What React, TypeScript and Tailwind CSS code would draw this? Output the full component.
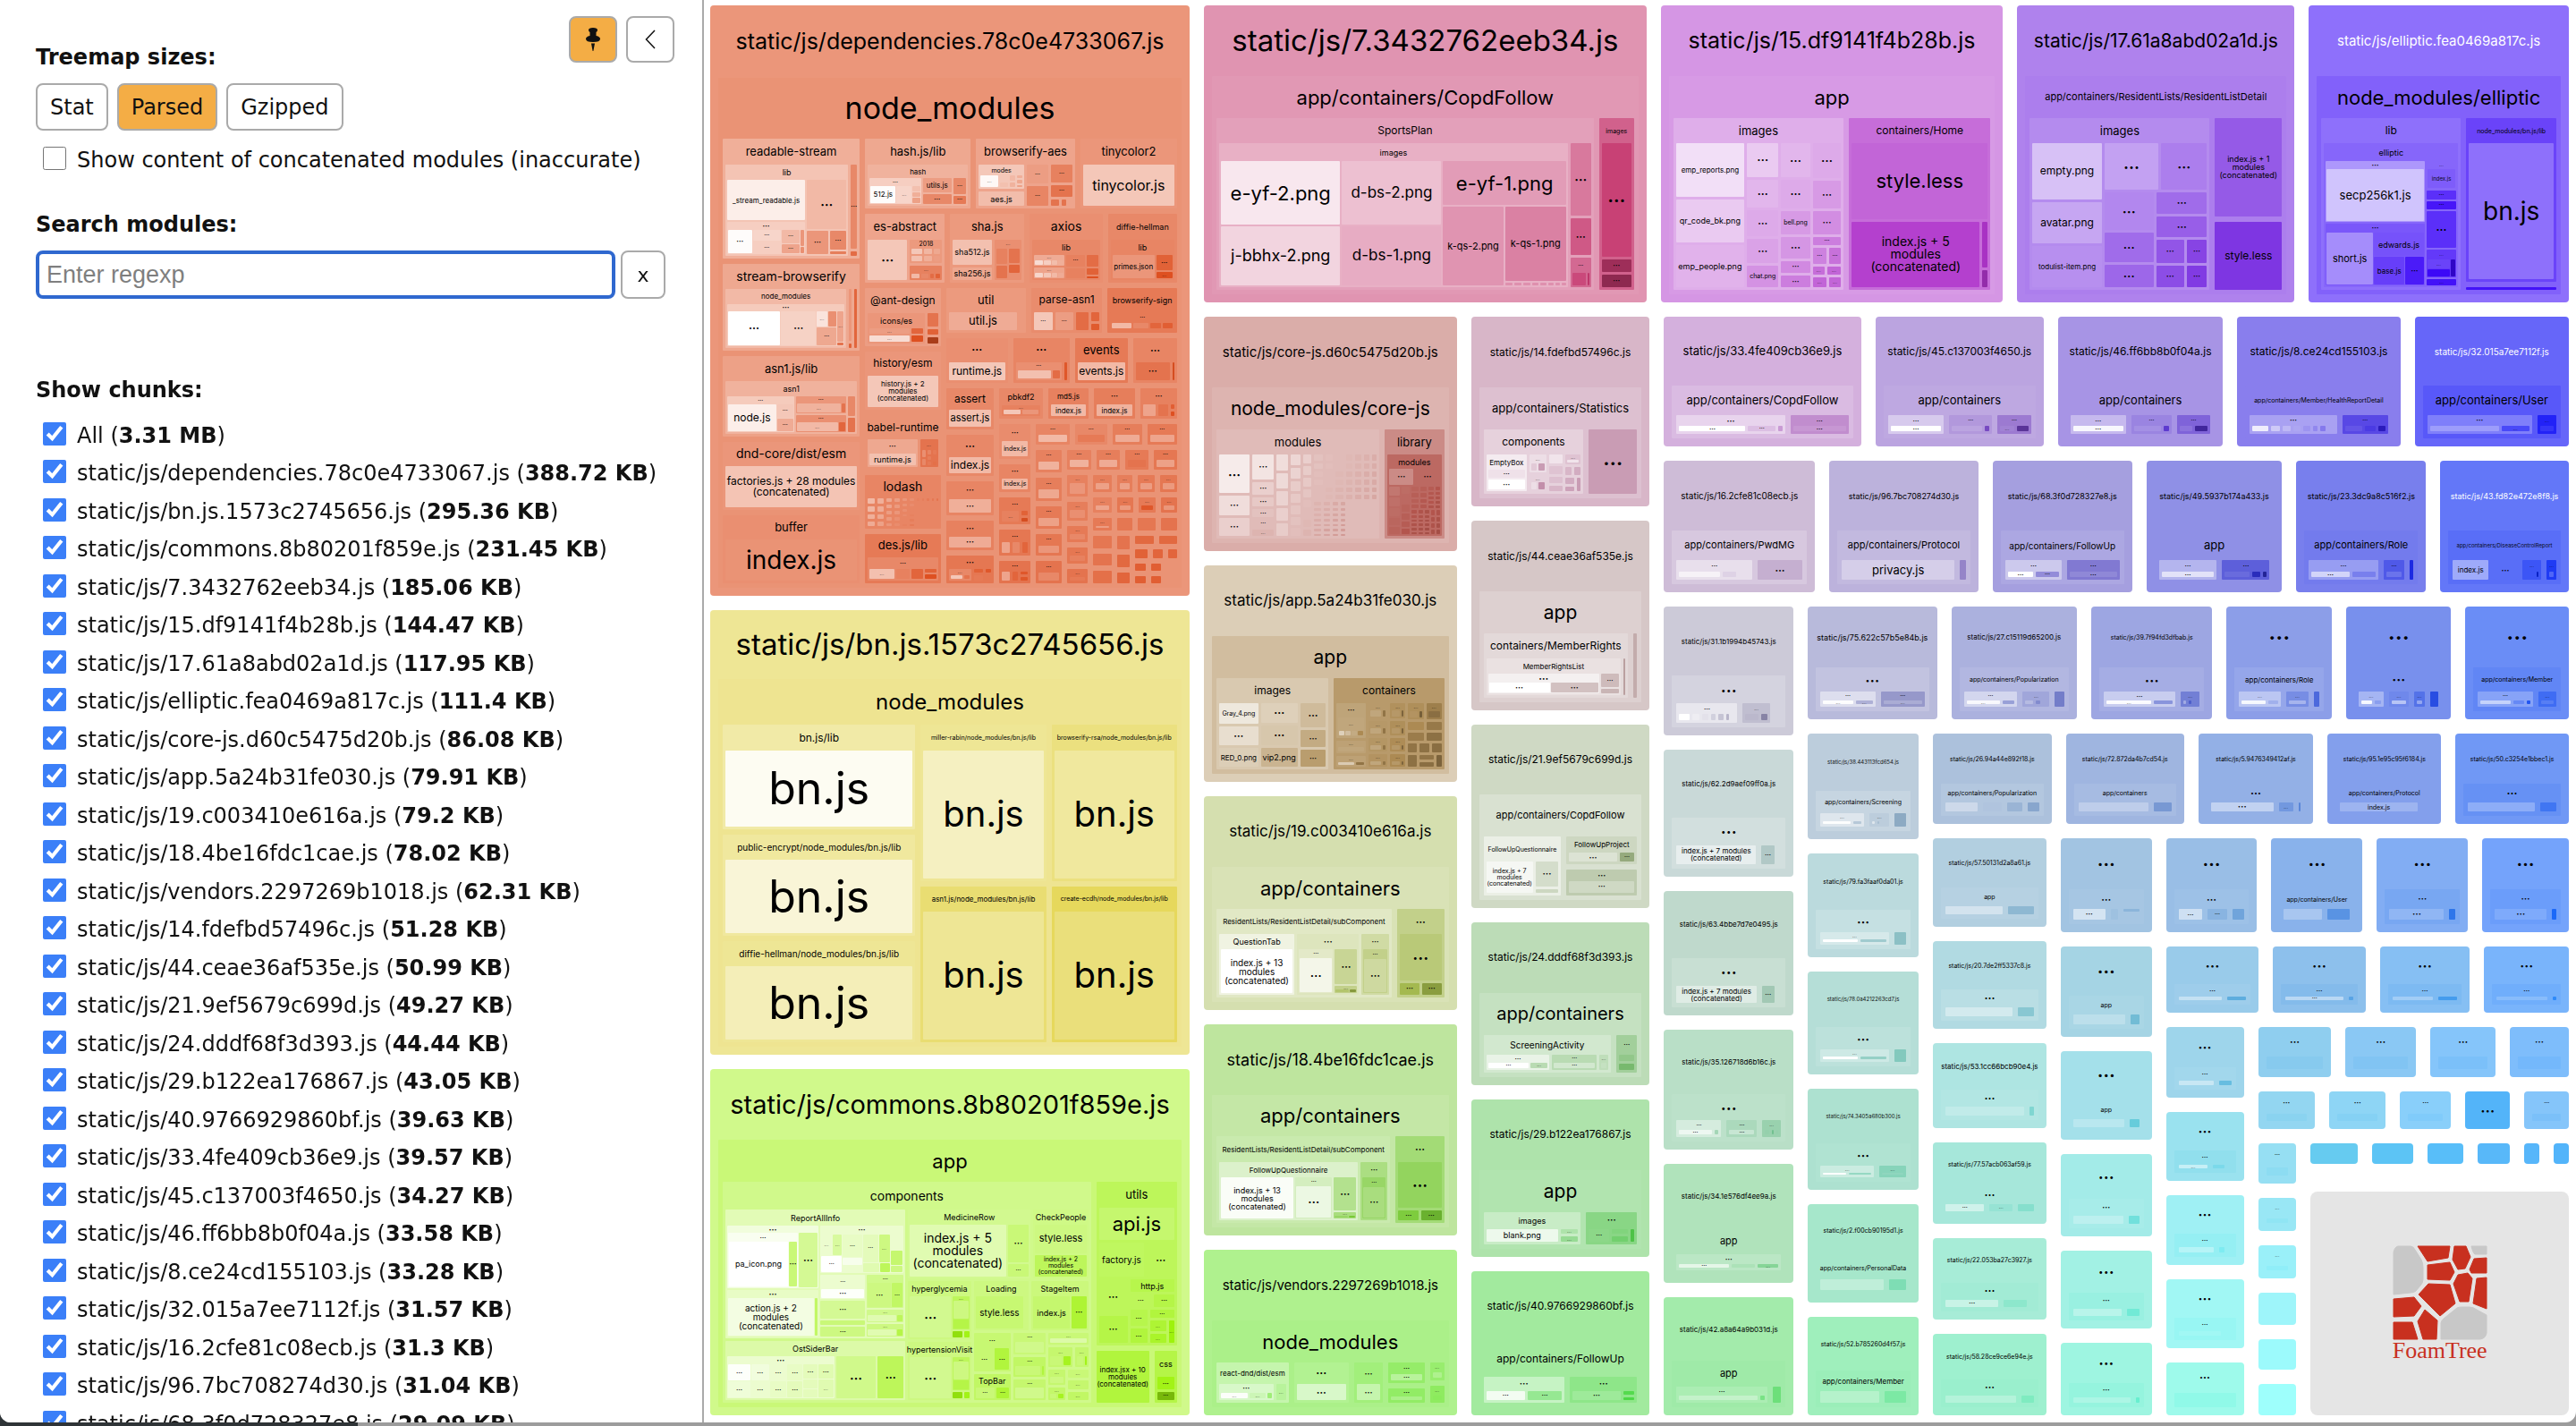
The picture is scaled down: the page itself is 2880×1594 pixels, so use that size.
import React, { useState } from 'react';

/* ---------- treemap model ---------- */

type Cell = {
  size: number;
  light?: number;
  label?: string;
  font?: number;
  head?: number;
  kids?: Cell[];
  group?: 'row' | 'col';
  hue?: number;
  sat?: number;
  logo?: boolean;
};

// Groups split their area without drawing anything themselves.
const R = (size: number, ...kids: Cell[]): Cell => ({ size, group: 'row', kids });
const C = (size: number, ...kids: Cell[]): Cell => ({ size, group: 'col', kids });
const gap = (size: number): Cell => ({ size });
// A box: weight, lightness, label, text size, height of the label band, children.
const b = (size: number, light: number, label = '', font = 8, head = 0, ...kids: Cell[]): Cell => ({
  size,
  light,
  label,
  font,
  head,
  kids,
});
// Boxes whose name does not fit show an ellipsis.
const d = (size: number, light: number, font = 8) => b(size, light, '…', font);
const m = (size: number, light: number, font: number, head: number, ...kids: Cell[]) =>
  b(size, light, '…', font, head, ...kids);
// A chunk carries the hue and the saturation for everything inside it.
const top = (
  size: number,
  [hue, sat, light]: [number, number, number],
  label: string,
  font: number,
  head: number,
  ...kids: Cell[]
): Cell => ({ size, hue, sat, light, label, font, head, kids });

// Many small modules, fading from one lightness to another.
const mesh = (size: number, counts: number[], from: number, to: number): Cell =>
  R(
    size,
    ...counts.map((n, x) =>
      C(
        counts.length * 2 - x,
        ...Array.from({ length: n }, (_, y) =>
          b(n + 3 - y / 2, Math.round(from + ((to - from) * (x + y / 2)) / (counts.length + n / 2))),
        ),
      ),
    ),
  );

/* ---------- chunks ---------- */

const tiny = (size: number, light: number) => m(size, light, 5, 9, b(1, light + 10));

const dependencies = top(
  660,
  [15, 74, 70],
  'static/js/dependencies.78c0e4733067.js',
  25,
  81,
  b(
    1, 69, 'node_modules', 34, 68,
    C(
      437,
      b(313, 77, 'readable-stream', 13, 29,
        b(392, 83, 'lib', 9, 17,
          C(250, b(106, 95, '_stream_readable.js', 8), m(84, 86, 8, 9, d(77, 99, 8), C(90, d(28, 88, 6), d(28, 86, 6)), C(60, d(32, 80, 6), d(22, 74, 6)), C(11, b(40, 70), b(16, 68)))),
          C(126, d(130, 80, 14), R(62, d(68, 70, 8), C(54, d(52, 66, 7), b(6, 63))))),
        C(20, d(226, 66, 7), b(12, 58))),
      b(228, 75, 'stream-browserify', 14, 28,
        b(385, 80, 'node_modules', 8, 17,
          m(370, 85, 8, 8, d(164, 100, 12), d(110, 87, 11), C(62, R(26, d(34, 92, 5), b(26, 68)), d(30, 75, 6)), C(20, d(60, 74, 5), b(6, 60)))),
        C(9, b(110, 70), b(10, 55)), b(8, 56)),
      b(210, 73, 'asn1.js/lib', 13, 28,
        b(412, 78, 'asn1', 9, 17,
          m(213, 85, 6, 9, b(152, 95, 'node.js', 12), C(51, d(34, 84, 6), d(34, 76, 6))),
          C(160, m(46, 70, 6, 8, d(140, 78, 5), b(10, 60)), m(44, 68, 6, 8, d(130, 80, 5), b(20, 56))),
          C(24, b(52, 66), b(38, 60)))),
      b(178, 70, 'dnd-core/dist/esm', 14, 27, b(1, 83, 'factories.js + 28 modules\n(concatenated)', 12)),
      b(178, 68, 'buffer', 13, 27, b(1, 69, 'index.js', 28)),
    ),
    C(
      995,
      R(
        182,
        b(337, 75, 'hash.js/lib', 13, 29,
          b(1, 78, 'hash', 8, 15,
            m(165, 86, 6, 9, b(82, 99, '512.js', 8), d(49, 88, 5), C(24, b(10, 82), b(10, 77), b(10, 73))),
            C(92, b(38, 72, 'utils.js', 8), d(24, 66, 7)),
            C(42, d(38, 66, 6), d(20, 62, 6)))),
        b(315, 74, 'browserify-aes', 13, 29,
          C(146, b(64, 84, 'modes', 7, 12, d(60, 98, 5), mesh(74, [2, 2, 3], 84, 68)), b(36, 81, 'aes.js', 9)),
          C(70, d(48, 72, 6), d(48, 65, 6)),
          C(68, d(44, 64, 6), d(28, 60, 6), R(16, b(26, 60), b(16, 60), gap(10)))),
        b(309, 70, 'tinycolor2', 13, 29, b(1, 84, 'tinycolor.js', 16)),
      ),
      R(
        181,
        b(255, 74, 'es-abstract', 13, 29, d(128, 84, 14), C(104, b(60, 71, '2018', 7, 10, mesh(1, [2, 2, 2], 84, 65)), m(36, 64, 5, 9, b(24, 80), b(20, 66), b(12, 58), b(14, 55)))),
        b(237, 71, 'sha.js', 13, 29, C(124, b(66, 82, 'sha512.js', 9), b(34, 75, 'sha256.js', 9)), m(88, 68, 5, 10, C(38, b(36, 64), b(28, 60)), C(40, b(36, 60), b(20, 56), gap(10)))),
        b(233, 68, 'axios', 14, 29, b(1, 66, 'lib', 9, 17, C(102, m(30, 76, 5, 6, mesh(1, [1, 1, 1, 1], 90, 70)), m(30, 74, 5, 6, mesh(1, [1, 1, 1, 1], 88, 70))), C(64, d(30, 64, 6), b(24, 64)), C(38, b(34, 58), b(16, 55), b(6, 50)))),
        b(221, 66, 'diffie-hellman', 9, 29, b(1, 65, 'lib', 9, 17, b(128, 70, 'primes.json', 8), C(50, d(40, 55, 7), d(16, 50, 5)))),
      ),
      R(
        773,
        C(
          241,
          b(152, 72, '@ant-design', 12, 28, b(188, 70, 'icons/es', 9, 17, C(128, d(14, 72, 5), d(14, 90, 5)), C(38, b(14, 56), b(14, 50))), C(34, b(40, 60), b(16, 55), b(16, 38))),
          b(154, 70, 'history/esm', 12, 27, b(1, 84, 'history.js + 2\nmodules\n(concatenated)', 8)),
          b(144, 69, 'babel-runtime', 12, 27, m(160, 75, 8, 16, b(1, 82, 'runtime.js', 9)), m(58, 60, 5, 12, mesh(1, [2, 3, 3], 68, 54))),
          b(140, 65, 'lodash', 14, 26, mesh(150, [4, 4, 5, 5, 6, 6], 80, 58), C(70, mesh(8, [1, 1, 1, 1, 1], 64, 58), gap(60))),
          b(130, 62, 'des.js/lib', 13, 26, m(1, 66, 7, 13, d(80, 82, 5), b(44, 64), b(38, 56), C(36, b(8, 55), b(8, 50)))),
        ),
        C(
          738,
          R(
            116,
            b(257, 71, 'util', 13, 27, b(225, 76, 'util.js', 13), gap(10)),
            b(229, 67, 'parse-asn1', 12, 27, d(60, 84, 6), d(58, 72, 6), b(40, 58), C(28, b(24, 56), b(14, 53))),
            b(224, 62, 'browserify-sign', 9, 27, m(1, 62, 6, 12, b(60, 80), b(50, 66), b(34, 56), b(30, 54))),
          ),
          R(
            119,
            m(199, 68, 12, 27, b(1, 84, 'runtime.js', 12)),
            m(180, 65, 12, 27, m(150, 68, 6, 9, b(100, 82), b(20, 58)), b(9, 52)),
            b(170, 62, 'events', 13, 27, b(1, 80, 'events.js', 12)),
            m(141, 65, 11, 27, d(108, 60, 10), b(7, 48)),
          ),
          R(
            510,
            C(
              154,
              b(106, 66, 'assert', 12, 24, b(1, 82, 'assert.js', 11)),
              m(108, 66, 11, 25, b(1, 80, 'index.js', 12)),
              m(89, 65, 9, 20, d(1, 77, 9)),
              m(78, 64, 9, 18, d(1, 76, 9)),
              m(73, 61, 9, 15, m(90, 66, 5, 7, b(50, 84), b(20, 60)), C(36, b(10, 55), b(14, 62)), C(22, b(8, 52), gap(14))),
            ),
            C(
              569,
              R(
                79,
                b(140, 66, 'pbkdf2', 9, 19, m(1, 64, 5, 5, b(40, 84), b(40, 70))),
                b(131, 64, 'md5.js', 8, 18, b(1, 80, 'index.js', 8)),
                m(132, 63, 8, 18, b(1, 78, 'index.js', 8)),
                m(119, 64, 8, 18, b(36, 74), b(26, 60), C(10, b(6, 54), b(6, 50))),
              ),
              R(
                417,
                C(
                  100,
                  m(90, 67, 8, 19, b(1, 80, 'index.js', 7)),
                  m(73, 65, 8, 16, b(1, 79, 'index.js', 7)),
                  m(71, 62, 7, 15, d(50, 64, 5), C(18, b(10, 55), b(8, 48))),
                  m(66, 61, 7, 14, b(24, 74), b(20, 66), b(18, 56)),
                  m(59, 60, 7, 12, b(24, 74), b(16, 56), C(24, b(8, 52), b(8, 52))),
                ),
                C(
                  453,
                  R(53, ...[109, 105, 96, 97].map((s, i) => m(s, [65, 66, 63, 62][i], 6, 12, b(1, [80, 62, 76, 74][i])))),
                  R(
                    350,
                    C(83, ...[61, 60, 59, 58, 59].map((s, i) => m(s, 64 - i, 6, 13, b(1, [78, 75, 73, 70, 66][i])))),
                    C(
                      354,
                      R(52, ...[78, 78, 76, 76].map((s, i) => m(s, 64 - i, 6, 11, b(1, [78, 76, 60, 73][i])))),
                      R(
                        284,
                        C(67, ...[56, 51, 42, 41, 38].map((s, i) => m(s, 64 - i, 5, 9, b(1, 70 - i * 2)))),
                        C(
                          270,
                          R(46, tiny(60, 63), tiny(52, 63), tiny(54, 62), tiny(57, 61)),
                          R(41, tiny(60, 64), tiny(54, 61), m(55, 62, 5, 9, b(1, 52)), tiny(53, 60)),
                          R(34, tiny(60, 62), b(52, 61), b(60, 61), b(52, 60)),
                          R(
                            126,
                            C(60, b(30, 61), b(30, 60), b(32, 59)),
                            C(42, b(36, 60), b(32, 57), b(30, 56)),
                            C(135, R(20, b(60, 57), b(58, 57)), R(24, b(40, 55), b(32, 56), b(28, 56)), R(20, b(40, 54), b(38, 54), gap(40)), R(20, b(40, 54), b(38, 54), gap(40))),
                          ),
                        ),
                      ),
                    ),
                  ),
                ),
              ),
            ),
          ),
        ),
      ),
    ),
  ),
);

const bn = top(
  497,
  [54, 73, 76],
  'static/js/bn.js.1573c2745656.js',
  33,
  77,
  b(
    1, 75, 'node_modules', 24, 51,
    C(
      615,
      b(197, 80, 'bn.js/lib', 12, 29, b(1, 97, 'bn.js', 50)),
      b(191, 78, 'public-encrypt/node_modules/bn.js/lib', 10, 28, b(1, 91, 'bn.js', 50)),
      b(191, 76, 'diffie-hellman/node_modules/bn.js/lib', 10, 28, b(1, 84, 'bn.js', 50)),
    ),
    C(
      400,
      b(296, 76, 'miller-rabin/node_modules/bn.js/lib', 7, 29, b(1, 86, 'bn.js', 40)),
      b(296, 68, 'asn1.js/node_modules/bn.js/lib', 8, 28, b(1, 76, 'bn.js', 40)),
    ),
    C(
      401,
      b(296, 71, 'browserify-rsa/node_modules/bn.js/lib', 7, 29, b(1, 78, 'bn.js', 40)),
      b(296, 63, 'create-ecdh/node_modules/bn.js/lib', 7, 28, b(1, 70, 'bn.js', 40)),
    ),
  ),
);

const visit = (size: number, label: string) =>
  b(size, 74, label, 9, 17, d(130, 77, 14), C(52, m(60, 66, 5, 5, C(1, b(20, 74), b(10, 62))), R(12, b(30, 46), b(14, 52))));

const commons = top(
  387,
  [82, 90, 76],
  'static/js/commons.8b80201f859e.js',
  29,
  79,
  b(
    1, 72, 'app', 22, 47,
    b(
      1176, 76, 'components', 14, 31,
      C(
        574,
        b(
          245, 85, 'ReportAllInfo', 9, 18,
          C(
            290,
            m(118, 93, 9, 8, m(222, 97, 7, 10, b(192, 100, 'pa_icon.png', 9), d(26, 72, 8)), d(60, 78, 11)),
            m(88, 88, 9, 9, b(276, 94, 'action.js + 2\nmodules\n(concatenated)', 10), b(9, 68)),
          ),
          C(
            265,
            m(90, 90, 8, 10,
              C(66, R(30, d(28, 90, 5), d(24, 80, 5)), d(24, 100, 6)),
              C(60, d(40, 88, 6), b(12, 96), b(12, 90)),
              C(84, R(46, d(44, 86, 6), d(32, 74, 5)), R(16, b(50, 84), b(30, 66))),
              C(38, b(24, 90), b(24, 70), b(10, 74))),
            R(
              116,
              C(142, m(46, 90, 6, 16, d(1, 99, 8)), d(34, 78, 8), b(8, 72), d(20, 74, 7)),
              C(115, m(62, 76, 6, 9, d(76, 74, 8), d(36, 68, 6)), m(24, 76, 5, 6, b(90, 84), b(16, 66)), m(24, 74, 5, 6, b(90, 84), b(16, 62))),
            ),
          ),
        ),
        b(
          112, 82, 'OstSiderBar', 9, 17,
          m(342, 90, 9, 9, C(72, d(1, 99, 7), d(1, 92, 7)), C(56, d(1, 93, 7), d(1, 90, 7)), C(54, d(1, 90, 7), d(1, 88, 7)), C(48, d(1, 88, 7), d(1, 86, 7)), C(46, d(28, 86, 7), b(16, 86), b(16, 86)), C(48, d(28, 84, 7), d(34, 84, 5))),
          d(128, 76, 14),
          d(82, 66, 12),
        ),
      ),
      C(
        575,
        R(
          130,
          b(387, 77, 'MedicineRow', 9, 17, b(306, 84, 'index.js + 5\nmodules\n(concatenated)', 14), C(68, d(72, 72, 10), d(24, 72, 6))),
          b(173, 75, 'CheckPeople', 9, 17, C(1, b(56, 74, 'style.less', 11), b(42, 66, 'index.js + 2\nmodules\n(concatenated)', 7))),
        ),
        R(
          225,
          C(199, visit(109, 'hyperglycemia'), visit(108, 'hypertensionVisit')),
          C(
            362,
            R(93, b(171, 74, 'Loading', 9, 17, b(150, 71, 'style.less', 10), b(6, 74)), b(176, 73, 'StageItem', 9, 17, b(112, 70, 'index.js', 9), d(46, 58, 8))),
            R(
              126,
              C(116, m(74, 71, 7, 17, d(60, 71, 7), d(48, 60, 7)), b(50, 68, 'TopBar', 9, 15, d(60, 72, 6), d(40, 58, 6))),
              C(102, m(40, 72, 6, 10, b(1, 76)), m(38, 68, 6, 10, b(90, 72), b(7, 60)), m(38, 70, 6, 9, b(1, 76))),
              C(124, m(22, 72, 5, 6, b(1, 82)), R(36, m(72, 70, 5, 10, b(40, 72), b(26, 54)), m(40, 70, 5, 10, b(24, 72), b(7, 52))), R(58, C(50, m(28, 70, 5, 8, b(1, 74)), m(24, 69, 5, 7, b(24, 72), b(18, 54))), C(64, tiny(16, 72), tiny(16, 70), tiny(16, 68)))),
            ),
          ),
        ),
      ),
    ),
    C(
      258,
      b(
        312, 66, 'utils', 13, 29,
        C(
          1,
          b(62, 70, 'api.js', 22),
          R(66, b(148, 67, 'factory.js', 10), d(90, 66, 11)),
          R(122, C(90, d(64, 66, 11), d(52, 62, 10)), C(140, b(24, 63, 'http.js', 9), R(26, d(1, 66, 7), d(1, 62, 7)), R(68, C(54, d(30, 63, 7), d(26, 60, 7)), C(78, d(14, 60, 6), R(38, C(50, d(18, 58, 5), d(16, 56, 5)), d(18, 50, 5)))))),
        ),
      ),
      R(98, b(168, 60, 'index.jsx + 10\nmodules\n(concatenated)', 8), b(72, 62, 'css', 9, 29, C(1, d(24, 52, 7), d(16, 38, 6)))),
    ),
  ),
);

const chunk7 = top(
  495,
  [337, 55, 73],
  'static/js/7.3432762eeb34.js',
  33,
  79,
  b(
    1, 74, 'app/containers/CopdFollow', 22, 47,
    b(
      848, 76, 'SportsPlan', 12, 28,
      b(
        779, 80, 'images', 9, 20,
        C(267, b(213, 94, 'e-yf-2.png', 22), b(198, 89, 'j-bbhx-2.png', 18)),
        C(222, b(215, 84, 'd-bs-2.png', 17), b(202, 79, 'd-bs-1.png', 17)),
        C(275, b(147, 75, 'e-yf-1.png', 22), R(264, b(134, 73, 'k-qs-2.png', 11), C(136, b(248, 68, 'k-qs-1.png', 11), mesh(9, [1, 1, 1, 1, 1, 1, 1, 1], 72, 72)))),
      ),
      C(46, d(240, 66, 14), d(123, 58, 11), m(98, 62, 6, 17, b(32, 54), b(4, 48))),
    ),
    b(78, 60, 'images', 7, 28, C(1, d(377, 52, 20), d(41, 40, 8), d(41, 36, 8))),
  ),
);

const chunk15 = top(
  383,
  [289, 59, 74],
  'static/js/15.df9141f4b28b.js',
  25,
  79,
  b(
    1, 75, 'app', 22, 47,
    b(
      414, 80, 'images', 13, 28,
      C(170, b(178, 92, 'emp_reports.png', 8), b(142, 87, 'qr_code_bk.png', 9), b(140, 81, 'emp_people.png', 9)),
      C(78, d(112, 87, 13), d(94, 82, 12), d(84, 79, 11), d(80, 77, 11), b(72, 73, 'chat.png', 7)),
      C(72, d(112, 82, 13), d(92, 79, 12), b(76, 75, 'bell.png', 7), d(70, 74, 11), d(38, 71, 8), d(38, 68, 8)),
      C(70, d(112, 79, 13), d(92, 75, 11), d(76, 72, 10), d(24, 68, 6), R(54, d(30, 69, 6), d(26, 65, 6)), R(26, d(26, 64, 5), d(30, 62, 5)), R(32, d(26, 62, 5), d(22, 62, 5))),
    ),
    b(
      344, 64, 'containers/Home', 12, 28,
      C(1, b(254, 62, 'style.less', 22), R(220, b(284, 53, 'index.js + 5\nmodules\n(concatenated)', 14), C(12, b(152, 48), b(56, 42)))),
    ),
  ),
);

const chunk17 = top(
  310,
  [265, 75, 72],
  'static/js/17.61a8abd02a1d.js',
  21,
  79,
  b(
    1, 71, 'app/containers/ResidentLists/ResidentListDetail', 11, 47,
    b(
      408, 74, 'images', 13, 28,
      C(156, b(188, 86, 'empty.png', 12), b(138, 80, 'avatar.png', 12), b(138, 75, 'todulist-item.png', 8)),
      C(
        232,
        R(156, d(124, 79, 18), d(104, 71, 15)),
        R(318, C(112, d(126, 73, 15), d(96, 67, 13), d(76, 66, 13)), C(114, d(70, 67, 11), d(68, 64, 11), R(76, d(62, 62, 9), d(46, 58, 8)), R(72, d(62, 60, 9), d(46, 56, 8)))),
      ),
    ),
    C(152, b(330, 63, 'index.js + 1\nmodules\n(concatenated)', 9), b(230, 55, 'style.less', 12)),
  ),
);

const elliptic = top(
  291,
  [253, 94, 71],
  'static/js/elliptic.fea0469a817c.js',
  15,
  79,
  b(
    1, 68, 'node_modules/elliptic', 22, 47,
    b(
      318, 71, 'lib', 12, 28,
      b(
        304, 69, 'elliptic', 9, 20,
        C(225, m(203, 79, 8, 9, b(1, 88, 'secp256k1.js', 13)), m(204, 66, 8, 10, b(106, 77, 'short.js', 11), C(114, b(76, 65, 'edwards.js', 9), R(90, b(70, 61, 'base.js', 8), d(42, 54, 8))))),
        C(68, m(92, 69, 5, 9, b(1, 67, 'index.js', 6)), d(28, 58, 6), d(28, 53, 6), d(122, 58, 12), m(92, 60, 5, 11, C(50, d(30, 62, 5), b(24, 50)), b(10, 40)), d(20, 52, 5)),
      ),
    ),
    C(205, b(548, 62, 'node_modules/bn.js/lib', 7, 28, b(1, 71, 'bn.js', 28)), b(8, 52)),
  ),
);

const columnB = C(
  283,
  top(262, [5, 40, 76], 'static/js/core-js.d60c5475d20b.js', 15, 79,
    b(1, 78, 'node_modules/core-js', 21, 47,
      b(545, 80, 'modules', 13, 28,
        C(105, d(107, 94, 14), d(54, 90, 10), d(50, 86, 10)),
        C(74, d(70, 92, 10), d(34, 86, 8), d(26, 84, 8), d(22, 82, 7), d(20, 80, 6), d(18, 78, 5)),
        mesh(120, [5, 7, 8], 90, 75),
        C(215, mesh(130, [6, 6, 6, 6, 6, 6, 6], 82, 72), R(98, mesh(110, [7, 7, 7, 7], 78, 68), gap(100)))),
      b(199, 66, 'library', 13, 28,
        b(1, 56, 'modules', 9, 16,
          C(1, R(44, d(84, 66, 9), d(84, 56, 9)), R(130, mesh(70, [5, 6], 60, 46), C(100, mesh(60, [4, 4, 5, 5], 54, 46), R(66, mesh(60, [6, 6, 6], 50, 44), mesh(30, [4, 4], 50, 44))))))))),
  top(242, [37, 35, 79], 'static/js/app.5a24b31fe030.js', 17, 79,
    b(1, 72, 'app', 21, 47,
      b(370, 77, 'images', 12, 28,
        C(128, b(57, 90, 'Gray_4.png', 7), d(52, 86, 11), b(52, 79, 'RED_0.png', 8)),
        C(120, d(56, 80, 12), d(54, 76, 12), b(52, 68, 'vip2.png', 9)),
        C(84, d(66, 71, 11), d(46, 64, 9), d(46, 58, 8))),
      b(364, 57, 'containers', 12, 28,
        C(94, m(100, 61, 8, 16, m(1, 62, 5, 15, b(10, 80), b(10, 72), b(10, 64), b(10, 50))), m(36, 60, 5, 7, b(1, 62)), m(30, 60, 5, 7, b(50, 78), b(26, 42))),
        C(64, ...[44, 38, 38, 36].map((s, i) => m(s, 57 - i, 5, 8, b(40, 62), b(12, 42)))),
        C(48, ...[44, 38, 38, 36].map((s, i) => m(s, 53 - i, 5, 8, b(30, 56), b(8, 36)))),
        C(110, R(44, m(50, 52, 5, 9, b(30, 54), b(8, 34)), m(46, 46, 5, 9, b(1, 40))), R(24, b(50, 50), b(46, 44)), R(20, b(50, 45), b(46, 41)), R(26, b(26, 42), b(30, 41), b(28, 40)), R(32, b(26, 41), C(44, b(12, 42), b(12, 40)), b(16, 36)))))),
  top(239, [72, 43, 78], 'static/js/19.c003410e616a.js', 17, 79,
    b(1, 80, 'app/containers', 22, 47,
      b(585, 84, 'ResidentLists/ResidentListDetail/subComponent', 8, 28,
        b(250, 92, 'QuestionTab', 9, 17, b(1, 100, 'index.js + 13\nmodules\n(concatenated)', 10)),
        m(206, 82, 10, 17, m(112, 85, 6, 10, d(1, 94, 13)), C(74, d(98, 71, 11), m(20, 68, 5, 4, b(30, 60), b(14, 42)))),
        m(90, 75, 8, 17, m(1, 68, 6, 11, d(1, 74, 11)))),
      m(158, 68, 11, 28, C(1, d(132, 63, 18), R(34, d(64, 52, 8), d(62, 43, 8)))))),
  top(236, [93, 58, 76], 'static/js/18.4be16fdc1cae.js', 18, 79,
    b(1, 78, 'app/containers', 22, 46,
      b(582, 80, 'ResidentLists/ResidentListDetail/subComponent', 8, 29,
        b(462, 87, 'FollowUpQuestionnaire', 8, 17,
          b(240, 98, 'index.js + 13\nmodules\n(concatenated)', 9),
          m(122, 84, 6, 10, d(1, 93, 13)),
          C(74, d(90, 72, 11), m(18, 68, 5, 4, b(30, 62), b(14, 50)))),
        m(90, 69, 8, 17, m(1, 62, 6, 11, d(1, 68, 10)))),
      m(162, 66, 11, 29, C(1, d(124, 60, 17), R(28, d(66, 52, 7), d(66, 44, 7)))))),
  top(185, [100, 78, 75], 'static/js/vendors.2297269b1018.js', 15, 79,
    b(1, 74, 'node_modules', 22, 47,
      b(244, 82, 'react-dnd/dist/esm', 8, 24, m(185, 88, 8, 10, d(92, 99, 5), d(56, 84, 5), b(14, 70)), d(34, 78, 5)),
      m(184, 76, 12, 24, d(1, 88, 11)),
      m(98, 71, 9, 24, d(1, 82, 9)),
      C(122, m(56, 67, 7, 13, d(1, 78, 7)), m(40, 66, 7, 9, b(1, 74))),
      C(48, m(48, 68, 5, 11, b(1, 75)), m(46, 65, 5, 11, b(1, 64))))),
);

const columnC = C(
  200,
  top(212, [328, 30, 78], 'static/js/14.fdefbd57496c.js', 12, 79,
    b(1, 81, 'app/containers/Statistics', 13, 47,
      b(335, 86, 'components', 12, 28,
        b(136, 94, 'EmptyBox', 8, 17, C(1, d(22, 91, 7), d(26, 100, 8))),
        C(56, m(52, 90, 5, 10, b(16, 84), b(18, 70)), m(46, 86, 5, 8, b(16, 90), b(18, 66))),
        C(46, b(26, 92), b(22, 82), b(18, 81), b(16, 78)),
        C(52, m(26, 82, 5, 6, b(1, 92)), R(24, b(24, 78), b(24, 75)), R(36, C(32, b(16, 75), b(12, 72)), b(14, 70))),
      ),
      d(162, 70, 22))),
  top(212, [0, 16, 81], 'static/js/44.ceae36af535e.js', 12, 79,
    b(1, 84, 'app', 21, 47,
      b(484, 87, 'containers/MemberRights', 12, 28,
        b(450, 90, 'MemberRightsList', 8, 17, m(372, 95, 11, 10, d(204, 100, 9), d(160, 79, 9)), C(60, d(36, 77, 7), b(14, 75))),
        b(6, 68)),
      b(13, 72))),
  top(204, [88, 21, 81], 'static/js/21.9ef5679c699d.js', 12, 78,
    b(1, 85, 'app/containers/CopdFollow', 11, 47,
      b(260, 92, 'FollowUpQuestionnaire', 7, 28, b(160, 96, 'index.js + 7\nmodules\n(concatenated)', 7), C(78, d(66, 83, 10), b(8, 80))),
      C(238, b(64, 80, 'FollowUpProject', 8, 18, d(160, 86, 9), d(50, 58, 6)), m(60, 74, 9, 13, d(1, 81, 8))))),
  top(182, [112, 35, 79], 'static/js/24.dddf68f3d393.js', 12, 79,
    b(1, 82, 'app/containers', 20, 47,
      b(429, 86, 'ScreeningActivity', 10, 22, m(212, 93, 7, 9, d(140, 100, 6), d(58, 78, 5)), m(150, 78, 6, 9, d(1, 86, 6)), m(30, 80, 5, 9, b(1, 82))),
      m(70, 71, 7, 22, C(1, b(16, 66), b(14, 58))))),
  top(176, [117, 50, 78], 'static/js/29.b122ea176867.js', 12, 79,
    b(1, 79, 'app', 21, 47,
      b(326, 85, 'images', 9, 19, b(244, 95, 'blank.png', 9), C(58, d(14, 78, 5), d(14, 72, 5))),
      m(172, 68, 10, 19, d(72, 69, 7), C(54, b(14, 66), b(14, 62)), b(14, 52)))),
  top(161, [117, 65, 77], 'static/js/40.9766929860bf.js', 12, 78,
    b(1, 77, 'app/containers/FollowUp', 12, 40,
      m(266, 86, 10, 16, d(128, 97, 7), d(112, 74, 7)),
      m(222, 72, 10, 16, d(154, 76, 8), C(36, b(10, 58), b(8, 56))))),
);

const rowD1 = R(
  145,
  top(221, [288, 40, 78], 'static/js/33.4fe409cb36e9.js', 13, 77,
    b(1, 81, 'app/containers/CopdFollow', 13, 33, m(367, 88, 9, 12, d(222, 100, 7), d(92, 82, 6), b(14, 72)), m(196, 68, 7, 12, d(1, 71, 7)))),
  top(189, [263, 49, 76], 'static/js/45.c137003f4650.js', 12, 77,
    b(1, 77, 'app/containers', 13, 33, m(190, 86, 7, 12, d(1, 100, 7)), m(146, 73, 6, 12, b(104, 76), b(18, 52)), m(114, 65, 6, 12, d(46, 67, 5), b(40, 40)))),
  top(185, [254, 61, 74], 'static/js/46.ff6bb8b0f04a.js', 12, 77,
    b(1, 74, 'app/containers', 13, 33, m(186, 83, 7, 12, d(1, 98, 7)), m(136, 70, 6, 12, b(94, 73), b(18, 52)), m(112, 62, 6, 12, b(42, 66), b(40, 38)))),
  top(183, [246, 75, 71], 'static/js/8.ce24cd155103.js', 12, 77,
    b(1, 71, 'app/containers/Member/HealthReportDetail', 7, 33, m(296, 79, 8, 12, b(52, 96), b(28, 88), b(26, 84), b(24, 80), b(22, 76), b(16, 73), b(16, 70), gap(20)), m(154, 59, 6, 12, b(52, 62), b(32, 56), b(20, 42)))),
  top(173, [240, 93, 69], 'static/js/32.015a7ee7112f.js', 10, 77,
    b(1, 66, 'app/containers/User', 13, 33, m(354, 74, 8, 12, b(222, 80), d(90, 63, 5)), m(64, 55, 5, 12, b(1, 59)))),
);

const rowD2 = R(
  147,
  top(169, [280, 26, 79], 'static/js/16.2cfe81c08ecb.js', 10, 78,
    b(1, 83, 'app/containers/PwdMG', 11, 33, m(250, 90, 7, 13, b(142, 96), b(48, 86), gap(36)), d(148, 75, 11))),
  top(167, [255, 38, 78], 'static/js/96.7bc708274d30.js', 9, 78,
    b(1, 80, 'app/containers/Protocol', 11, 33, b(382, 86, 'privacy.js', 13), b(20, 65))),
  top(156, [245, 50, 75], 'static/js/68.3f0d728327e8.js', 9, 78,
    b(1, 77, 'app/containers/FollowUp', 10, 33, m(192, 86, 7, 13, d(84, 100, 7), d(78, 70, 6)), m(178, 65, 7, 13, d(1, 69, 7)))),
  top(152, [239, 63, 73], 'static/js/49.5937b174a433.js', 9, 78,
    b(1, 73, 'app', 13, 33, m(196, 82, 7, 13, d(1, 93, 7)), m(160, 61, 7, 13, b(82, 64), b(26, 45), b(14, 36)))),
  top(145, [236, 77, 70], 'static/js/23.3dc9a8c516f2.js', 9, 78,
    b(1, 69, 'app/containers/Role', 11, 33, m(232, 77, 7, 13, d(122, 90, 7), b(76, 70)), m(70, 61, 6, 13, b(1, 67)), b(12, 50))),
  top(144, [232, 91, 68], 'static/js/43.fd82e472e8f8.js', 9, 78,
    b(1, 66, 'app/containers/DiseaseControlReport', 6, 33, b(122, 80, 'index.js', 8), d(78, 66, 9), m(66, 60, 5, 13, gap(40), b(8, 40)), m(32, 54, 5, 13, b(1, 64)))),
);

const columnD3 = C(
  145,
  top(144, [248, 16, 82], 'static/js/31.1b1994b45743.js', 8, 77,
    b(1, 85, '…', 18, 31, m(215, 92, 7, 12, b(38, 100), b(26, 94), b(22, 90), b(18, 84), b(18, 80), b(12, 75), gap(10)), m(96, 78, 5, 12, b(44, 76), b(20, 58)), gap(20))),
  top(142, [176, 17, 82], 'static/js/62.2d9aef09ff0a.js', 8, 76,
    b(1, 85, '…', 18, 31, b(268, 92, 'index.js + 7 modules\n(concatenated)', 8), d(44, 74, 7), gap(4))),
  top(140, [149, 26, 80], 'static/js/63.4bbe7d7e0495.js', 8, 75,
    b(1, 83, '…', 18, 31, b(268, 90, 'index.js + 7 modules\n(concatenated)', 8), d(42, 71, 7), gap(4))),
  top(134, [143, 38, 80], 'static/js/35.126718d6b16c.js', 8, 72,
    b(1, 81, '…', 18, 29, m(150, 88, 6, 11, d(108, 95, 6), b(14, 74)), m(102, 76, 6, 11, d(1, 84, 6)), m(62, 71, 5, 11, b(20, 70), b(12, 60), b(10, 70)))),
  top(133, [133, 48, 79], 'static/js/34.1e576df4ee9a.js', 8, 71,
    b(1, 79, 'app', 11, 30, m(350, 82, 8, 11, d(162, 93, 6), b(76, 78), d(66, 68, 5)))),
  top(132, [127, 64, 78], 'static/js/42.a8a64a9b031d.js', 8, 71,
    b(1, 77, 'app', 11, 29, m(304, 80, 7, 10, b(262, 86), b(14, 68)), b(28, 65))),
);

const rowE1 = R(
  126,
  top(145, [237, 33, 79], 'static/js/75.622c57b5e84b.js', 9, 68,
    b(1, 82, '…', 16, 27, m(188, 90, 6, 10, d(102, 99, 5), d(58, 76, 5)), m(148, 69, 6, 10, d(1, 75, 5)))),
  top(141, [233, 44, 77], 'static/js/27.c15119d65200.js', 8, 68,
    b(1, 79, 'app/containers/Popularization', 7, 27, m(182, 88, 6, 10, d(110, 98, 5), b(40, 72)), m(92, 74, 5, 10, b(34, 80), b(20, 66), gap(20)), b(32, 62))),
  top(136, [232, 54, 75], 'static/js/39.7f94fd3dfbab.js', 7, 68,
    b(1, 77, '…', 16, 27, m(240, 86, 7, 10, d(142, 99, 5), b(58, 70)), m(64, 64, 5, 10, b(10, 76), b(12, 55), gap(14)))),
  top(118, [228, 67, 73], '…', 24, 68,
    b(1, 75, 'app/containers/Role', 8, 27, m(142, 84, 5, 10, b(72, 98), b(28, 78)), m(78, 68, 5, 10, b(1, 79)), b(18, 58))),
  top(118, [228, 76, 70], '…', 24, 68,
    b(1, 70, '…', 15, 27, m(86, 80, 5, 10, b(28, 98), b(18, 74)), m(66, 68, 5, 10, b(1, 84)), m(38, 62, 5, 10, b(1, 76)), b(28, 52))),
  top(116, [225, 88, 69], '…', 24, 68,
    b(1, 67, 'app/containers/Member', 7, 27, m(188, 75, 6, 10, b(102, 88), b(36, 68), b(10, 54)), m(62, 60, 5, 10, b(1, 65)))),
);

const columnE2 = C(
  124,
  top(118, [208, 31, 80], 'static/js/38.443113fcd654.js', 6, 64,
    b(1, 83, 'app/containers/Screening', 7, 25, m(148, 90, 5, 9, b(92, 99), b(28, 78)), m(68, 80, 5, 9, b(12, 90), b(12, 74), gap(24)), b(38, 66))),
  top(116, [185, 33, 80], 'static/js/79.fa3faaf0da01.js', 7, 63,
    b(1, 83, '…', 14, 25, m(232, 88, 5, 8, b(116, 100), b(86, 72)), b(40, 66))),
  top(115, [170, 39, 79], 'static/js/78.0a4212263cd7.js', 6, 62,
    b(1, 81, '…', 14, 25, m(232, 86, 5, 8, b(116, 100), b(86, 70)), b(40, 65))),
  top(113, [160, 47, 78], 'static/js/74.3405a680b300.js', 6, 61,
    b(1, 79, '…', 14, 25, m(182, 86, 5, 8, b(78, 100), b(74, 72)), m(90, 68, 5, 8, b(1, 70)))),
  top(110, [154, 58, 78], 'static/js/2.f00cb90195d1.js', 7, 59,
    b(1, 78, 'app/containers/PersonalData', 7, 25, b(214, 84), b(58, 68))),
  top(110, [142, 71, 78], 'static/js/52.b785260d4f57.js', 7, 60,
    b(1, 77, 'app/containers/Member', 8, 23, b(198, 83), b(74, 70))),
);

const rowF1 = R(
  101,
  top(133, [214, 41, 77], 'static/js/26.94a44e892f18.js', 7, 56, b(1, 79, 'app/containers/Popularization', 7, 21, b(112, 86), b(66, 78), b(54, 72), b(40, 67))),
  top(132, [219, 51, 75], 'static/js/72.872da4b7cd54.js', 7, 56, b(1, 77, 'app/containers', 7, 21, b(230, 83), b(56, 65))),
  top(129, [219, 63, 74], 'static/js/5.9476349412af.js', 7, 56, b(1, 74, '…', 12, 21, d(214, 85, 10), d(48, 66, 5), b(8, 60))),
  top(127, [224, 74, 72], 'static/js/95.1e95c95f6184.js', 7, 56, b(1, 72, 'app/containers/Protocol', 7, 21, b(272, 78, 'index.js', 7), gap(20))),
  top(127, [222, 87, 70], 'static/js/50.c3254e1bbec1.js', 7, 56, b(1, 68, '…', 12, 21, b(226, 76), b(56, 60))),
);

const columnF2 = C(
  127,
  top(99, [203, 43, 79], 'static/js/57.50131d2a8a61.js', 7, 55, b(1, 80, 'app', 7, 21, b(192, 88), b(88, 69))),
  top(98, [189, 45, 79], 'static/js/20.7de2ff5337c8.js', 7, 54, b(1, 81, '…', 12, 20, b(226, 88), b(54, 68))),
  top(94, [177, 51, 79], 'static/js/53.1cc66bcb90e4.js', 8, 52, b(1, 80, '…', 12, 19, b(264, 84), b(14, 67))),
  top(91, [168, 58, 78], 'static/js/77.57acb063af59.js', 7, 50, b(1, 78, '…', 12, 19, d(132, 88, 6), d(78, 74, 5), b(54, 70))),
  top(91, [162, 65, 79], 'static/js/22.053ba27c3927.js', 7, 50, b(1, 78, '…', 12, 19, d(186, 87, 7), b(80, 73), gap(6))),
  top(91, [156, 73, 78], 'static/js/58.28ce9ce6e94e.js', 7, 51, b(1, 77, '…', 11, 18, b(238, 83), b(42, 71))),
);

const more = (size: number, color: [number, number, number], f: number, h: number, f2: number, h2: number, ...kids: Cell[]) =>
  top(size, color, '…', f, h, b(1, color[2] - (color[1] > 70 ? 2 : -1), '…', f2, h2, ...kids));

const rowG1 = R(
  105,
  more(102, [208, 52, 76], 20, 57, 11, 22, d(100, 89, 8), b(24, 75), C(48, b(8, 70), gap(8))),
  more(102, [211, 60, 75], 20, 57, 11, 22, d(82, 88, 7), d(66, 71, 6), b(42, 65)),
  top(102, [215, 71, 73], '…', 20, 57, b(1, 73, 'app/containers/User', 7, 22, b(130, 80), b(76, 62))),
  more(102, [217, 82, 73], 20, 57, 10, 22, d(184, 76, 10), b(20, 55)),
  more(97, [219, 94, 72], 20, 57, 10, 22, d(180, 74, 10), b(14, 54)),
);

const columnG2 = C(
  102,
  top(100, [195, 54, 77], '…', 20, 55, b(1, 78, 'app', 7, 21, b(182, 83), b(30, 64))),
  top(99, [188, 62, 78], '…', 20, 55, b(1, 78, 'app', 7, 21, b(178, 83), b(34, 63))),
  more(91, [178, 64, 78], 18, 50, 9, 19, b(176, 84), b(38, 66)),
  more(86, [170, 74, 79], 18, 47, 8, 18, b(170, 84), b(42, 68)),
  more(81, [166, 81, 79], 17, 45, 8, 16, b(196, 82), b(10, 67)),
);

const rowH1 = R(
  74,
  more(104, [203, 66, 76], 16, 42, 7, 14, b(150, 86), b(64, 62)),
  more(104, [208, 72, 74], 16, 42, 7, 14, d(192, 84, 6), b(14, 62)),
  more(101, [209, 82, 74], 16, 42, 7, 14, b(138, 80), b(66, 60)),
  more(95, [213, 94, 73], 15, 42, 7, 14, b(176, 76), b(12, 58)),
);

const columnH2 = C(
  87,
  more(78, [197, 66, 77], 15, 45, 7, 15, b(118, 87), b(42, 64)),
  more(77, [189, 72, 77], 15, 43, 7, 16, d(98, 87, 5), b(38, 70), gap(4)),
  more(77, [183, 80, 79], 15, 43, 7, 15, b(124, 84), b(16, 72), gap(6)),
  more(76, [178, 84, 80], 15, 43, 7, 15, b(158, 80), gap(20)),
  top(59, [170, 90, 80], '…', 12, 34, b(1, 77)),
);

const shelf = (size: number, hue: number, sat: number, light: number, f: number, h: number) =>
  top(size, [hue, sat, light], '…', f, h, b(1, light - 2));
const plain = (size: number, hue: number, sat: number, light: number) => top(size, [hue, sat, light], '', 8, 0);

const rowI1 = R(56, shelf(82, 201, 75, 75, 11, 33), shelf(79, 205, 83, 75, 11, 33), shelf(73, 207, 92, 75, 11, 33), shelf(66, 210, 94, 74, 10, 33));
const rowI2 = R(
  42,
  shelf(64, 197, 77, 76, 8, 25),
  shelf(64, 199, 84, 76, 8, 25),
  shelf(57, 203, 92, 76, 7, 25),
  top(51, [205, 93, 65], '…', 16, 0),
  shelf(50, 207, 92, 75, 6, 25),
);
const columnJ = C(
  43,
  shelf(45, 193, 79, 77, 6, 27),
  shelf(38, 189, 82, 78, 5, 23),
  shelf(37, 186, 89, 79, 5, 23),
  plain(36, 183, 90, 80),
  plain(35, 181, 94, 80),
  plain(35, 178, 100, 81),
);
const rowK = R(24, plain(53, 196, 82, 67), plain(47, 199, 88, 66), plain(41, 202, 93, 66), plain(36, 204, 93, 66), plain(18, 205, 94, 66), plain(17, 205, 94, 65));

const treemap = R(
  1,
  C(536, dependencies, bn, commons),
  C(
    1526,
    R(332, chunk7, chunk15, chunk17, elliptic),
    R(
      1228,
      columnB,
      columnC,
      C(
        1013,
        rowD1,
        rowD2,
        R(
          904,
          columnD3,
          C(
            852,
            rowE1,
            R(
              762,
              columnE2,
              C(
                712,
                rowF1,
                R(
                  645,
                  columnF2,
                  C(
                    569,
                    rowG1,
                    R(523, columnG2, C(451, rowH1, R(433, columnH2, C(348, rowI1, rowI2, R(305, columnJ, C(290, rowK, { size: 265, logo: true })))))),
                  ),
                ),
              ),
            ),
          ),
        ),
      ),
    ),
  ),
);

/* ---------- treemap view ---------- */

const TEXT: Record<number, string> = {
  5: 'text-[5px] opacity-60', 6: 'text-[6px] opacity-90', 7: 'text-[7px]', 8: 'text-[8px]', 9: 'text-[9px]',
  10: 'text-[10px]', 11: 'text-[11px]', 12: 'text-[12px]', 13: 'text-[13px]', 14: 'text-[14px]', 15: 'text-[15px]',
  16: 'text-[16px]', 17: 'text-[17px]', 18: 'text-[18px]', 20: 'text-[20px]', 21: 'text-[21px]', 22: 'text-[22px]',
  24: 'text-[24px]', 25: 'text-[25px]', 28: 'text-[28px]', 29: 'text-[29px]', 33: 'text-[33px]', 34: 'text-[34px]',
  40: 'text-[40px]', 50: 'text-[50px]',
};
const GAP = ['gap-4', 'gap-2', 'gap-1.5', 'gap-[3px]', 'gap-0.5', 'gap-px', 'gap-px'];
const INSET = ['px-[9px] pb-[9px]', 'px-[5px] pb-[5px]', 'px-[3px] pb-[3px]', 'px-0.5 pb-0.5', 'px-px pb-px', 'px-px pb-px'];

function Label({ cell, white }: { cell: Cell; white: boolean }) {
  const family = cell.label === '…' ? "font-['Noto_Sans_CJK_SC',sans-serif] font-bold" : '';
  return (
    <span
      lang={cell.label === '…' ? 'zh-CN' : undefined}
      className={`text-center leading-none whitespace-pre ${family} ${TEXT[cell.font ?? 8]} ${white ? 'text-white' : 'text-black'}`}
    >
      {cell.label}
    </span>
  );
}

function CellView({ cell, depth, hue, sat }: { cell: Cell; depth: number; hue: number; sat: number }) {
  const grow = { flexGrow: cell.size };
  if (cell.logo) return <FoamTreeBadge grow={cell.size} />;
  if (cell.light === undefined) {
    return (
      <div className={`flex min-h-0 min-w-0 basis-0 ${cell.group === 'col' ? 'flex-col' : ''} ${GAP[depth]}`} style={grow}>
        {cell.kids?.map((k, i) => <CellView key={i} cell={k} depth={depth} hue={hue} sat={sat} />)}
      </div>
    );
  }
  const h = cell.hue ?? hue;
  const s = cell.sat ?? sat;
  const style = { ...grow, backgroundColor: `hsl(${h} ${s}% ${cell.light}%)` };
  const white = depth === 0 && s > 90 && h > 230;
  const round = depth === 0 ? 'rounded' : 'rounded-[1px]';
  if (!cell.kids?.length) {
    return (
      <div className={`flex min-h-0 min-w-0 basis-0 items-center justify-center ${round}`} style={style}>
        {cell.label && <Label cell={cell} white={white} />}
      </div>
    );
  }
  return (
    <div className={`flex min-h-0 min-w-0 basis-0 flex-col ${round}`} style={style}>
      <div className="flex shrink-0 items-center justify-center" style={{ height: cell.head }}>
        <Label cell={cell} white={white} />
      </div>
      <div className={`flex min-h-0 flex-1 ${GAP[depth + 1]} ${INSET[depth]}`}>
        {cell.kids.map((k, i) => <CellView key={i} cell={k} depth={depth + 1} hue={h} sat={s} />)}
      </div>
    </div>
  );
}

function FoamTreeBadge({ grow }: { grow: number }) {
  return (
    <div className="flex min-h-0 min-w-0 basis-0 flex-col pt-[15px]" style={{ flexGrow: grow }}>
      <a href="#foamtree" className="flex flex-1 flex-col items-center justify-center rounded-lg bg-[#e5e5e5]">
        <svg viewBox="0 0 106 106" className="size-[106px]" aria-hidden="true" strokeLinejoin="round" strokeWidth="1">
          <g fill="#c8c8c8" stroke="#c8c8c8">
            <path d="M6 1H20Q23 1 25 5L32 16Q34 20 34 25V38Q34 42 31 45L26 51Q24 53 20 53L1 55V8Q2 2 6 1Z" />
            <path d="M88 1H105V10H92Q90 9 88 1Z" />
            <path d="M72 70Q74 69 78 69H86Q90 69 94 72L105 78V98Q104 104 98 105H54V87Q54 85 57 82Z" />
          </g>
          <g fill="#c8301f" stroke="#c8301f">
            <path d="M28 1H64L62 14L39 18Z" />
            <path d="M69 1H82L87 13L81 26L73 27L67 16Z" />
            <path d="M91 15L105 14V31L88 31L86 27Z" />
            <path d="M39 22L64 19L69 30L64 39L39 38Z" />
            <path d="M73 33L84 31L89 37L85 63H75L68 43Z" />
            <path d="M94 37L105 36V71L90 65Z" />
            <path d="M40 43L64 44L70 65L53 79L29 55Z" />
            <path d="M1 60L24 58L32 68L24 79L1 80Z" />
            <path d="M36 72L50 84L49 105H34L28 85Z" />
            <path d="M1 86H22L28 105H1Z" />
          </g>
        </svg>
        <span className="font-['Liberation_Serif',serif] text-[26px] leading-6 text-[#c8301f]">FoamTree</span>
      </a>
    </div>
  );
}

/* ---------- sidebar ---------- */

const CHUNKS: [string, string][] = [
  ['All', '3.31 MB'],
  ['static/js/dependencies.78c0e4733067.js', '388.72 KB'],
  ['static/js/bn.js.1573c2745656.js', '295.36 KB'],
  ['static/js/commons.8b80201f859e.js', '231.45 KB'],
  ['static/js/7.3432762eeb34.js', '185.06 KB'],
  ['static/js/15.df9141f4b28b.js', '144.47 KB'],
  ['static/js/17.61a8abd02a1d.js', '117.95 KB'],
  ['static/js/elliptic.fea0469a817c.js', '111.4 KB'],
  ['static/js/core-js.d60c5475d20b.js', '86.08 KB'],
  ['static/js/app.5a24b31fe030.js', '79.91 KB'],
  ['static/js/19.c003410e616a.js', '79.2 KB'],
  ['static/js/18.4be16fdc1cae.js', '78.02 KB'],
  ['static/js/vendors.2297269b1018.js', '62.31 KB'],
  ['static/js/14.fdefbd57496c.js', '51.28 KB'],
  ['static/js/44.ceae36af535e.js', '50.99 KB'],
  ['static/js/21.9ef5679c699d.js', '49.27 KB'],
  ['static/js/24.dddf68f3d393.js', '44.44 KB'],
  ['static/js/29.b122ea176867.js', '43.05 KB'],
  ['static/js/40.9766929860bf.js', '39.63 KB'],
  ['static/js/33.4fe409cb36e9.js', '39.57 KB'],
  ['static/js/45.c137003f4650.js', '34.27 KB'],
  ['static/js/46.ff6bb8b0f04a.js', '33.58 KB'],
  ['static/js/8.ce24cd155103.js', '33.28 KB'],
  ['static/js/32.015a7ee7112f.js', '31.57 KB'],
  ['static/js/16.2cfe81c08ecb.js', '31.3 KB'],
  ['static/js/96.7bc708274d30.js', '31.04 KB'],
  ['static/js/68.3f0d728327e8.js', '29.09 KB'],
];

const BUTTON = 'rounded-lg border-2 border-[#aaaaaa]';

function Sidebar() {
  const [mode, setMode] = useState('Parsed');
  return (
    <aside className="relative flex w-[787px] shrink-0 flex-col overflow-hidden border-r-2 border-[#aaaaaa] bg-white px-10 pt-12 font-['DejaVu_Sans',sans-serif] text-[24px] text-[#111111]">
      <div className="absolute top-[18px] right-[31px] flex gap-[10px]">
        <button type="button" aria-label="Pin" className={`flex h-[52px] w-[54px] items-center justify-center bg-[#f4ad45] ${BUTTON}`}>
          <svg viewBox="0 0 16 26" className="h-[26px] w-4" aria-hidden="true">
            <path d="M3 2.500Q3 0 8 0T13 2.500Q13 4 11.500 5V9Q16 10 16 12.500Q16 16 8 16T0 12.500Q0 10 4.500 9V5Q3 4 3 2.500ZM6 17.500H10L8.400 26H7.600Z" fill="#111" />
          </svg>
        </button>
        <button type="button" aria-label="Hide" className={`flex h-[52px] w-[54px] items-center justify-center bg-white ${BUTTON}`}>
          <svg viewBox="0 0 12 22" className="h-[22px] w-3" aria-hidden="true">
            <path d="M11 1L1.500 11L11 21" fill="none" stroke="#111" strokeWidth="1.500" />
          </svg>
        </button>
      </div>

      <h2 className="mb-[13px] leading-8 font-bold">Treemap sizes:</h2>
      <div className="flex h-[53px] shrink-0 gap-[10px]">
        {['Stat', 'Parsed', 'Gzipped'].map((name) => (
          <button key={name} type="button" onClick={() => setMode(name)} className={`px-[14px] ${mode === name ? 'bg-[#f4ad45]' : 'bg-white'} ${BUTTON}`}>
            {name}
          </button>
        ))}
      </div>
      <label className="mt-3 flex h-[42px] shrink-0 items-center pl-2 whitespace-nowrap">
        <input type="checkbox" className="mr-3 mb-1 size-[26px]" />
        Show content of concatenated modules (inaccurate)
      </label>

      <h2 className="mt-[35px] mb-[13px] leading-8 font-bold">
        <label htmlFor="search">Search modules:</label>
      </h2>
      <div className="flex h-[54px] shrink-0 gap-[6px]">
        <input
          id="search"
          type="text"
          autoFocus
          placeholder="Enter regexp"
          className="w-[648px] rounded-lg border-4 border-[#2f68cf] bg-white px-2 font-['Liberation_Sans',sans-serif] text-[27px] outline-none placeholder:text-[#7f7f7f]"
        />
        <button type="button" aria-label="Clear" className={`w-[50px] bg-white text-[22px] ${BUTTON}`}>
          x
        </button>
      </div>

      <h2 className="mt-[86px] mb-[13px] leading-8 font-bold">Show chunks:</h2>
      <ul>
        {CHUNKS.map(([name, size]) => (
          <li key={name} className="h-[43px] even:h-[42px]">
            <label className="flex h-full items-center pl-2 whitespace-nowrap">
              <input type="checkbox" defaultChecked className="mr-3 mb-1 size-[26px] shrink-0 accent-[#3b7ff8]" />
              <span>
                {name} (<b>{size}</b>)
              </span>
            </label>
          </li>
        ))}
      </ul>
    </aside>
  );
}

export default function App() {
  return (
    <div className="h-screen bg-[linear-gradient(90deg,#2f3437_400px,#9c9c9c_400px)] pb-1">
      <div className="flex h-full overflow-hidden rounded-b-xl bg-white">
        <Sidebar />
        <main className="flex min-w-0 flex-1 pt-1.5 pr-2 pb-2 pl-[7px] font-['Inter',sans-serif]">
          <CellView cell={treemap} depth={0} hue={0} sat={0} />
        </main>
      </div>
    </div>
  );
}
